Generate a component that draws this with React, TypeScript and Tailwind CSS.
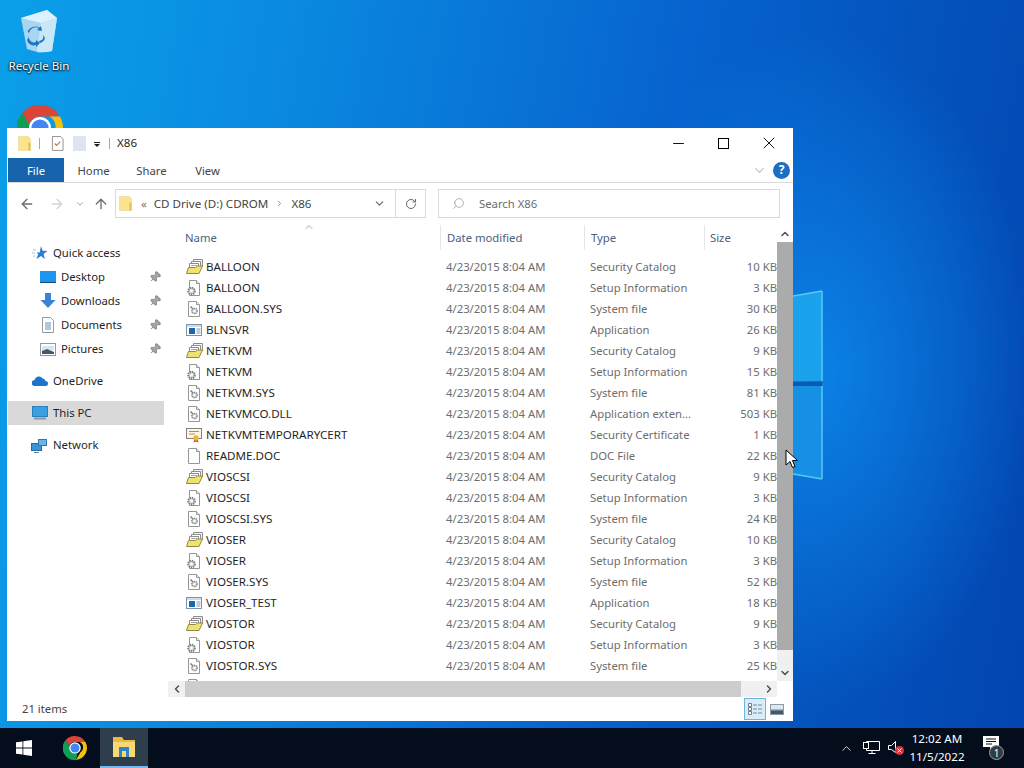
import { ChevronDown, ChevronLeft, ChevronRight, ChevronUp, RotateCw, ArrowLeft, ArrowRight, ArrowUp, Search, Minus, X, Pin } from 'lucide-react'

type Kind = 'catalog' | 'setup' | 'sys' | 'app' | 'cert' | 'doc'

interface FileRow {
  name: string
  type: string
  size: string
  kind: Kind
}

const typeOf: Record<Kind, string> = {
  catalog: 'Security Catalog',
  setup: 'Setup Information',
  sys: 'System file',
  app: 'Application',
  cert: 'Security Certificate',
  doc: 'DOC File',
}

const row = (name: string, kind: Kind, size: string, type?: string): FileRow => ({
  name,
  kind,
  size,
  type: type ?? typeOf[kind],
})

const files: FileRow[] = [
  row('BALLOON', 'catalog', '10 KB'),
  row('BALLOON', 'setup', '3 KB'),
  row('BALLOON.SYS', 'sys', '30 KB'),
  row('BLNSVR', 'app', '26 KB'),
  row('NETKVM', 'catalog', '9 KB'),
  row('NETKVM', 'setup', '15 KB'),
  row('NETKVM.SYS', 'sys', '81 KB'),
  row('NETKVMCO.DLL', 'sys', '503 KB', 'Application exten...'),
  row('NETKVMTEMPORARYCERT', 'cert', '1 KB'),
  row('README.DOC', 'doc', '22 KB'),
  row('VIOSCSI', 'catalog', '9 KB'),
  row('VIOSCSI', 'setup', '3 KB'),
  row('VIOSCSI.SYS', 'sys', '24 KB'),
  row('VIOSER', 'catalog', '10 KB'),
  row('VIOSER', 'setup', '3 KB'),
  row('VIOSER.SYS', 'sys', '52 KB'),
  row('VIOSER_TEST', 'app', '18 KB'),
  row('VIOSTOR', 'catalog', '9 KB'),
  row('VIOSTOR', 'setup', '3 KB'),
  row('VIOSTOR.SYS', 'sys', '25 KB'),
]

function FileIcon({ kind }: { kind: Kind }) {
  return (
    <svg width="18" height="16" viewBox="0 0 18 16" className="shrink-0">
      {kind === 'catalog' && (
        <g>
          <path d="M7.500 0.500h9v7h-9z" fill="#f4f4f4" stroke="#8c8c8c" />
          <path d="M5.500 2.500h9v7h-9z" fill="#fff" stroke="#8c8c8c" />
          <path d="M7 4.500h6M7 6h6" stroke="#a3a3a3" />
          <path d="M3.500 4.500h9v8h-9z" fill="#fff" stroke="#8c8c8c" />
          <path d="M5 6.500h6" stroke="#a3a3a3" />
          <path d="M2.500 8.500h7l2-1.500h5l-3.500 7.500h-12.500z" fill="#f0e26e" stroke="#8f8a4a" />
        </g>
      )}
      {kind === 'setup' && (
        <g>
          <path d="M3.500 0.500h7l3 3v12h-10z" fill="#fff" stroke="#969696" />
          <path d="M10.500 0.500v3h3" fill="#eee" stroke="#969696" />
          <circle cx="5.500" cy="11" r="3.300" fill="#d8d8d8" stroke="#7c7c7c" strokeDasharray="1.400 0.800" strokeWidth="2" />
          <circle cx="5.500" cy="11" r="1.300" fill="#fff" />
        </g>
      )}
      {kind === 'sys' && (
        <g>
          <path d="M2.500 0.500h8l3 3v12h-11z" fill="#fff" stroke="#969696" />
          <path d="M10.500 0.500v3h3" fill="#eee" stroke="#969696" />
          <circle cx="8.500" cy="10" r="2.600" fill="#e8e8e8" stroke="#838383" strokeDasharray="1.300 0.600" strokeWidth="1.500" />
          <path d="M4.500 5.500l2.500 2.500" stroke="#838383" strokeWidth="1.600" />
          <circle cx="8.500" cy="10" r="0.900" fill="#fff" />
        </g>
      )}
      {kind === 'app' && (
        <g>
          <rect x="0.500" y="2.500" width="15" height="11" fill="#fff" stroke="#7f93a6" />
          <rect x="1" y="3" width="14" height="2" fill="#cfdce8" />
          <rect x="3" y="6" width="6" height="6" fill="#1767b5" />
          <path d="M10.500 7h4M10.500 9h4M10.500 11h4" stroke="#8898a6" />
        </g>
      )}
      {kind === 'cert' && (
        <g>
          <rect x="0.500" y="1.500" width="15" height="10" fill="#fbf6e5" stroke="#85817a" />
          <path d="M3 4.500h10M3 7h6" stroke="#c9863c" />
          <path d="M8.500 12l-1 3.500 2.500-1 2.500 1-1-3.500z" fill="#b5472f" />
          <circle cx="10" cy="11" r="2.700" fill="#e6bb32" />
        </g>
      )}
      {kind === 'doc' && (
        <g>
          <path d="M2.500 0.500h8l3 3v12h-11z" fill="#fff" stroke="#969696" />
          <path d="M10.500 0.500v3h3" fill="#f0f0f0" stroke="#969696" />
        </g>
      )}
    </svg>
  )
}

function Folder({ className }: { className: string }) {
  return (
    <svg viewBox="0 0 14 16" className={className}>
      <path d="M0.500 0.500h10.500l2.500 2.500v12.500h-13z" fill="#fbe58c" stroke="#ecdfa6" />
      <path d="M11 7v8.500h2.500v-8.500z" fill="#e3c55e" />
    </svg>
  )
}

function Navitem({ label, icon, pinned, selected, inset }: { label: string; icon: React.ReactNode; pinned?: boolean; selected?: boolean; inset?: boolean }) {
  return (
    <div className={`flex items-center h-6 mr-[4px] ml-px relative ${selected ? 'bg-[#d9d9d9]' : ''} ${inset ? 'pl-[31px] gap-[5px]' : 'pl-[23px] gap-[5px]'}`}>
      <span className="w-[17px] h-4 flex items-center justify-center shrink-0">{icon}</span>
      <span>{label}</span>
      {pinned && (
        <Pin size={12} strokeWidth={2} className="absolute left-[141px] top-[6px] rotate-45 text-[#8c8c8c] fill-[#a8a8a8]" />
      )}
    </div>
  )
}

function ChromeLogo({ size }: { size: number }) {
  return (
    <svg width={size} height={size} viewBox="0 0 48 48" className="shrink-0">
      <path d="M24 0a24 24 0 0 1 20.800 12H24a12 12 0 0 0-11.400 8.300L5.500 8.100A24 24 0 0 1 24 0z" fill="#db4437" />
      <path d="M44.800 12A24 24 0 0 1 26 47.900l9-15.400a12 12 0 0 0-1-20.500z" fill="#f4c20d" />
      <path d="M26 47.900A24 24 0 0 1 5.500 8.100l9 15.500a12 12 0 0 0 14.800 12z" fill="#0f9d58" />
      <circle cx="24" cy="24" r="11.500" fill="#fff" />
      <circle cx="24" cy="24" r="9" fill="#4285f4" />
    </svg>
  )
}

function RecycleBin() {
  return (
    <svg width="40" height="44" viewBox="0 0 40 44">
      <path d="M2 9l26-8 10 8-5 33q-8 2-15 1l-10-3z" fill="#a8d6f0" />
      <path d="M2 9l26-8 10 8-16 5z" fill="#dcf1fb" />
      <path d="M22 14l16-5-5 33q-8 2-15 1z" fill="#c8e7f7" />
      <path d="M10 24a7 7 0 0 1 10-5l-2 2 5 1-1-5-1.500 1.500a9 9 0 0 0-12 4zM10 28l-2 3a7 7 0 0 0 9 5v2l4-4-4-3v2a5 5 0 0 1-7-5zM24 26l2 3a7 7 0 0 1-5 5l-1-2 3-1a5 5 0 0 0 1-5z" fill="#1c74c6" />
    </svg>
  )
}

export default function App() {
  return (
    <div className="relative w-[1024px] h-[768px] overflow-hidden flex flex-col font-['Noto_Sans',sans-serif] text-[11.3px] leading-none text-[#1f1f1f] bg-[radial-gradient(ellipse_220px_340px_at_815px_370px,#0b82e6_0%,rgba(11,110,220,0)_100%),linear-gradient(100deg,#0b9fe9_0%,#0a8ae0_25%,#0763cf_60%,#0453bd_80%,#0345b0_100%)]">
      {/* desktop */}
      <div className="relative flex-1">
        <div className="absolute left-[2px] top-[9px] w-[74px] flex flex-col items-center">
          <RecycleBin />
          <span className="mt-[7px] text-white text-[11.6px] [text-shadow:0_1px_2px_#000,0_0_2px_#000]">Recycle Bin</span>
        </div>
        <div className="absolute left-[17px] top-[105px]">
          <ChromeLogo size={46} />
        </div>
        <svg className="absolute left-[793px] top-[288px]" width="31" height="195" viewBox="0 0 31 195">
          <path d="M0 8l29-5v90l-29 1z" fill="#1aa3ec" />
          <path d="M0 93.500h29v5h-29z" fill="#0a5ab4" />
          <path d="M0 98h29v93l-29-5z" fill="#1690e5" />
          <path d="M29 3v90M29 98v93M0 8l29-5M0 186l29 5" stroke="#59c8f5" strokeWidth="1.500" fill="none" />
        </svg>

        {/* explorer window */}
        <div className="absolute left-[7px] top-[128px] w-[786px] h-[593px] bg-white flex flex-col">
          <div className="h-[30px] flex items-center shrink-0 relative">
            <Folder className="ml-[11px] w-[13px] h-[15px]" />
            <span className="ml-[8px] w-px h-[11px] bg-[#a8a8a8]" />
            <svg viewBox="0 0 14 16" className="ml-[11px] w-[13px] h-[15px]">
              <path d="M1.500 0.500h9l2.500 2.500v12.500h-11.500z" fill="#fff" stroke="#8e8e8e" />
              <path d="M4 8l2 2 4-4" stroke="#d9793a" strokeWidth="1.400" fill="none" />
            </svg>
            <span className="ml-[9px] w-[13px] h-[15px] bg-[#dfe5f0]" />
            <span className="ml-[8px] flex flex-col items-center gap-[1px] w-[6px] mt-[3px]">
              <span className="w-[6px] h-px bg-[#1f1f1f]" />
              <span className="w-0 h-0 border-x-[3px] border-x-transparent border-t-[3px] border-t-[#1f1f1f]" />
            </span>
            <span className="ml-[9px] w-px h-[11px] bg-[#a8a8a8]" />
            <span className="ml-[7px] text-[11.6px]">X86</span>
            <div className="ml-auto flex items-center text-black">
              <Minus size={17} strokeWidth={1.300} className="mr-[31px]" />
              <span className="w-[11px] h-[11px] border border-black mr-[30px]" />
              <X size={20} strokeWidth={1.100} className="mr-[14px]" />
            </div>
          </div>

          <div className="h-[25px] flex items-stretch border-b border-[#d9d9d9] shrink-0 relative text-[#444]">
            <span className="ml-px w-[56px] h-[24px] pt-[2px] bg-[#1764ac] text-white flex items-center justify-center">File</span>
            <span className="ml-[15px] w-[29px] pt-[2px] flex items-center justify-center">Home</span>
            <span className="ml-[29px] w-[29px] pt-[2px] flex items-center justify-center">Share</span>
            <span className="ml-[27px] w-[29px] pt-[2px] flex items-center justify-center">View</span>
            <ChevronDown size={15} strokeWidth={2} className="ml-auto self-center mr-[6px] text-[#c4c4c4]" />
            <span className="self-center mr-[3px] w-[17px] h-[17px] rounded-full bg-[#1b6ec2] text-white text-[12px] font-bold flex items-center justify-center">?</span>
          </div>

          <div className="h-[42px] pb-[1px] flex items-center shrink-0 text-[#444]">
            <ArrowLeft size={16} strokeWidth={2} className="ml-[12px] text-[#6d6d6d]" />
            <ArrowRight size={16} strokeWidth={2} className="ml-[14px] text-[#d4d4d4]" />
            <ChevronDown size={10} strokeWidth={2} className="ml-[10px] text-[#8b8b8b]" />
            <ArrowUp size={16} strokeWidth={2} className="ml-[8px] text-[#6d6d6d]" />
            <div className="ml-[6px] w-[311px] h-[29px] border border-[#d9d9d9] flex items-center">
              <Folder className="ml-[3px] w-[13px] h-[15px]" />
              <span className="ml-[9px] text-[#777]">«</span>
              <span className="ml-[7px] text-[11.6px]">CD Drive (D:) CDROM</span>
              <ChevronRight size={9} strokeWidth={2} className="ml-[7px] text-[#777]" />
              <span className="ml-[7px] text-[11.6px]">X86</span>
              <ChevronDown size={13} strokeWidth={2} className="ml-auto mr-[9px] text-[#666]" />
              <span className="w-[30px] h-full border-l border-[#d9d9d9] flex items-center justify-center">
                <RotateCw size={12} strokeWidth={2} className="text-[#666]" />
              </span>
            </div>
            <div className="ml-[12px] w-[342px] h-[29px] border border-[#d9d9d9] flex items-center text-[#6d6d6d]">
              <Search size={13} strokeWidth={1.200} className="ml-[13px] -scale-x-100 text-[#8a8a8a]" />
              <span className="ml-[14px]">Search X86</span>
            </div>
          </div>

          <div className="flex-1 flex min-h-0">
            <nav className="w-[161px] shrink-0 pt-[16px] flex flex-col">
              <Navitem label="Quick access" icon={<svg width="16" height="16" viewBox="0 0 16 16"><path d="M9 1l1.600 4.800 4.900 0.100-4 3 1.500 5-4-3-4.500 3 1.700-5-2-1.500h3.500z" fill="#2a7dd2" /><path d="M1 5h3M0 8h3M1 11h2" stroke="#9ac4ec" /></svg>} />
              <Navitem inset pinned label="Desktop" icon={<span className="w-[16px] h-[12px] bg-[#1e96ee] border-b border-[#0f4f86]" />} />
              <Navitem inset pinned label="Downloads" icon={<svg width="16" height="16" viewBox="0 0 16 16"><path d="M5 0h6v7h4.500l-7.500 8-7.500-8h4.500z" fill="#3a84d3" /></svg>} />
              <Navitem inset pinned label="Documents" icon={<svg width="12" height="16" viewBox="0 0 12 16"><path d="M0.500 0.500h8l3 3v12h-11z" fill="#fff" stroke="#9a9a9a" /><path d="M3 6h6M3 8h6M3 10h6M3 12h6" stroke="#5b94b8" /></svg>} />
              <Navitem inset pinned label="Pictures" icon={<svg width="16" height="13" viewBox="0 0 16 13"><rect x="0.500" y="0.500" width="15" height="12" fill="#fff" stroke="#8f9aa3" /><path d="M2 3h12v4l-12 1z" fill="#d5e6f2" /><path d="M2 8l5-2 7 3v2h-12z" fill="#47596a" /></svg>} />
              <div className="h-2" />
              <Navitem label="OneDrive" icon={<svg width="16" height="10" viewBox="0 0 16 10"><path d="M3 10a3 3 0 0 1-0.500-6 4.500 4.500 0 0 1 8.200-1.500 3.500 3.500 0 0 1 2.800 2.500 2.500 2.500 0 0 1 0 5z" fill="#1c74cc" /></svg>} />
              <div className="h-2" />
              <Navitem selected label="This PC" icon={<svg width="16" height="14" viewBox="0 0 16 14"><rect x="0.500" y="0.500" width="15" height="10" fill="#3aa0e6" stroke="#2c7fb9" /><path d="M2 12.500h12" stroke="#7c99ad" strokeWidth="2" /></svg>} />
              <div className="h-2" />
              <Navitem label="Network" icon={<svg width="17" height="16" viewBox="0 0 17 16"><rect x="0.500" y="6.500" width="10" height="7" fill="#3a94d8" stroke="#266a9e" /><path d="M3 15.500h5" stroke="#5b7c96" /><rect x="7.500" y="2.500" width="8" height="6" fill="#6cb5ea" stroke="#2c78b3" /></svg>} />
            </nav>

            <div className="flex-1 flex flex-col min-w-0">
              <div className="flex-1 flex min-h-0">
                <div className="flex-1 min-w-0 overflow-hidden">
                  <div className="relative h-[31px] grid grid-cols-[272px_144px_120px_1fr] text-[#4d6078]">
                    <ChevronUp size={12} strokeWidth={1.500} className="absolute left-[135px] top-[-4px] text-[#8a8a8a]" />
                    <span className="pl-[17px] pt-[7px]">Name</span>
                    <span className="pl-[6px] pt-[7px] border-l border-[#e5e5e5] h-[25px]">Date modified</span>
                    <span className="pl-[6px] pt-[7px] border-l border-[#e5e5e5] h-[25px]">Type</span>
                    <span className="pl-[5px] pt-[7px] border-l border-[#e5e5e5] h-[25px]">Size</span>
                  </div>
                  {files.map((f, i) => (
                    <div key={i} className="h-[21px] grid grid-cols-[272px_144px_120px_1fr] items-center">
                      <span className="pl-[18px] flex items-center gap-[2px] text-[#1f1f1f] text-[11.6px]">
                        <FileIcon kind={f.kind} />
                        {f.name}
                      </span>
                      <span className="pl-[6px] text-[#6d6d6d]">4/23/2015 8:04 AM</span>
                      <span className="pl-[6px] text-[#6d6d6d]">{f.type}</span>
                      <span className="text-right text-[#6d6d6d]">{f.size}</span>
                    </div>
                  ))}
                  {/* top of the next row, cut by the horizontal scrollbar */}
                  <div className="pl-[18px] pt-[3px]">
                    <FileIcon kind="doc" />
                  </div>
                </div>
                <div className="w-[16px] shrink-0 flex flex-col bg-[#f0f0f0]">
                  <span className="h-[17px] flex items-center justify-center bg-white">
                    <ChevronUp size={12} strokeWidth={3} className="text-[#505050]" />
                  </span>
                  <span className="h-[408px] bg-[#ababab]" />
                  <span className="flex-1 bg-[#f0f0f0]" />
                  <span className="h-[16px] pb-[1px] flex items-center justify-center bg-[#f0f0f0]">
                    <ChevronDown size={12} strokeWidth={3} className="text-[#505050]" />
                  </span>
                </div>
              </div>
              <div className="h-[16px] shrink-0 flex mr-[16px] bg-[#f0f0f0]">
                <span className="w-[17px] flex items-center justify-center">
                  <ChevronLeft size={12} strokeWidth={3} className="text-[#505050]" />
                </span>
                <span className="w-[556px] bg-[#cdcdcd]" />
                <span className="flex-1" />
                <span className="w-[17px] flex items-center justify-center">
                  <ChevronRight size={12} strokeWidth={3} className="text-[#505050]" />
                </span>
              </div>
            </div>
          </div>

          <div className="h-[24px] shrink-0 flex items-center text-[#444]">
            <span className="ml-[15px]">21 items</span>
            <span className="ml-auto w-[22px] h-[22px] bg-[#d8edf8] border border-[#6fb5d6] flex items-center justify-center">
              <svg width="16" height="14" viewBox="0 0 16 14">
                <path d="M1.500 1.500h3v3h-3zM1.500 5.500h3v3h-3zM1.500 9.500h3v3h-3z" fill="#fff" stroke="#6d7d8a" />
                <path d="M6 3h4M11 3h4M6 7h4M11 7h4M6 11h4M11 11h4" stroke="#7a8a96" />
              </svg>
            </span>
            <span className="ml-[4px] mr-[9px] w-[14px] h-[11px] border border-[#8f9aa3] bg-[linear-gradient(180deg,#dbe9f4_40%,#44566a_70%)]" />
          </div>
        </div>
      </div>

      {/* taskbar */}
      <div className="h-[40px] shrink-0 bg-[#040d1c] flex items-stretch text-white">
        <span className="w-[48px] flex items-center justify-center">
          <svg width="16" height="16" viewBox="0 0 16 16">
            <path d="M0 2.300l6.500-0.900v6.200h-6.500zM7.300 1.300l8.700-1.300v7.600h-8.700zM0 8.400h6.500v6.200l-6.500-0.900zM7.300 8.400h8.700v7.600l-8.700-1.300z" fill="#fff" />
          </svg>
        </span>
        <span className="w-[52px] pl-[2px] flex items-center justify-center">
          <ChromeLogo size={24} />
        </span>
        <span className="w-[48px] bg-[#2f3e4d] border-b-2 border-[#76b9ed] flex items-center justify-center">
          <svg width="22" height="20" viewBox="0 0 22 20">
            <path d="M0 0h9l2 3h11v17h-22z" fill="#e8b93e" />
            <path d="M0 5h22v15h-22z" fill="#f8d775" />
            <rect x="6" y="10" width="10" height="10" fill="#2f85c8" />
            <rect x="9" y="14" width="4" height="6" fill="#f8d775" />
          </svg>
        </span>
        <div className="ml-auto flex items-center">
          <ChevronUp size={15} strokeWidth={1.300} className="mr-[9px]" />
          <svg width="17" height="14" viewBox="0 0 17 14" className="mr-[8px]">
            <path d="M3.500 3.500v-3h13v9h-13zM9 9.500v3M5.500 12.500h7" stroke="#fff" fill="none" />
            <rect x="0.500" y="1.500" width="5" height="6" fill="#040d1c" stroke="#fff" />
          </svg>
          <svg width="16" height="14" viewBox="0 0 16 14" className="mr-[7px]">
            <path d="M0.500 4.500h3l4-4v11l-4-3h-3z" stroke="#fff" fill="none" />
            <circle cx="11.500" cy="9.500" r="4.500" fill="#d8343c" />
            <path d="M9.500 7.500l4 4M13.500 7.500l-4 4" stroke="#fff" />
          </svg>
          <div className="w-[52px] flex flex-col items-center gap-[6px] text-[11.6px]">
            <span>12:02 AM</span>
            <span>11/5/2022</span>
          </div>
          <div className="relative w-[24px] ml-[17px] mr-[20px] h-[24px]">
            <svg width="16" height="14" viewBox="0 0 16 14" className="absolute left-[3px] top-0">
              <path d="M0 0h16v11h-6l-3 3v-3h-7z" fill="#fff" />
              <path d="M3 3h10M3 5.500h10M3 8h6" stroke="#040d1c" />
            </svg>
            <span className="absolute left-[9px] top-[9px] w-[15px] h-[15px] rounded-full bg-[#333a44] border border-[#9aa0a6] text-[10px] flex items-center justify-center">1</span>
          </div>
        </div>
      </div>

      {/* mouse pointer */}
      <svg className="absolute left-[785px] top-[449px]" width="14" height="21" viewBox="0 0 14 21">
        <path d="M1 1v15l4-3.500 2.500 6 2.500-1-2.500-6h5z" fill="#fff" stroke="#000" strokeWidth="1" />
      </svg>
    </div>
  )
}
